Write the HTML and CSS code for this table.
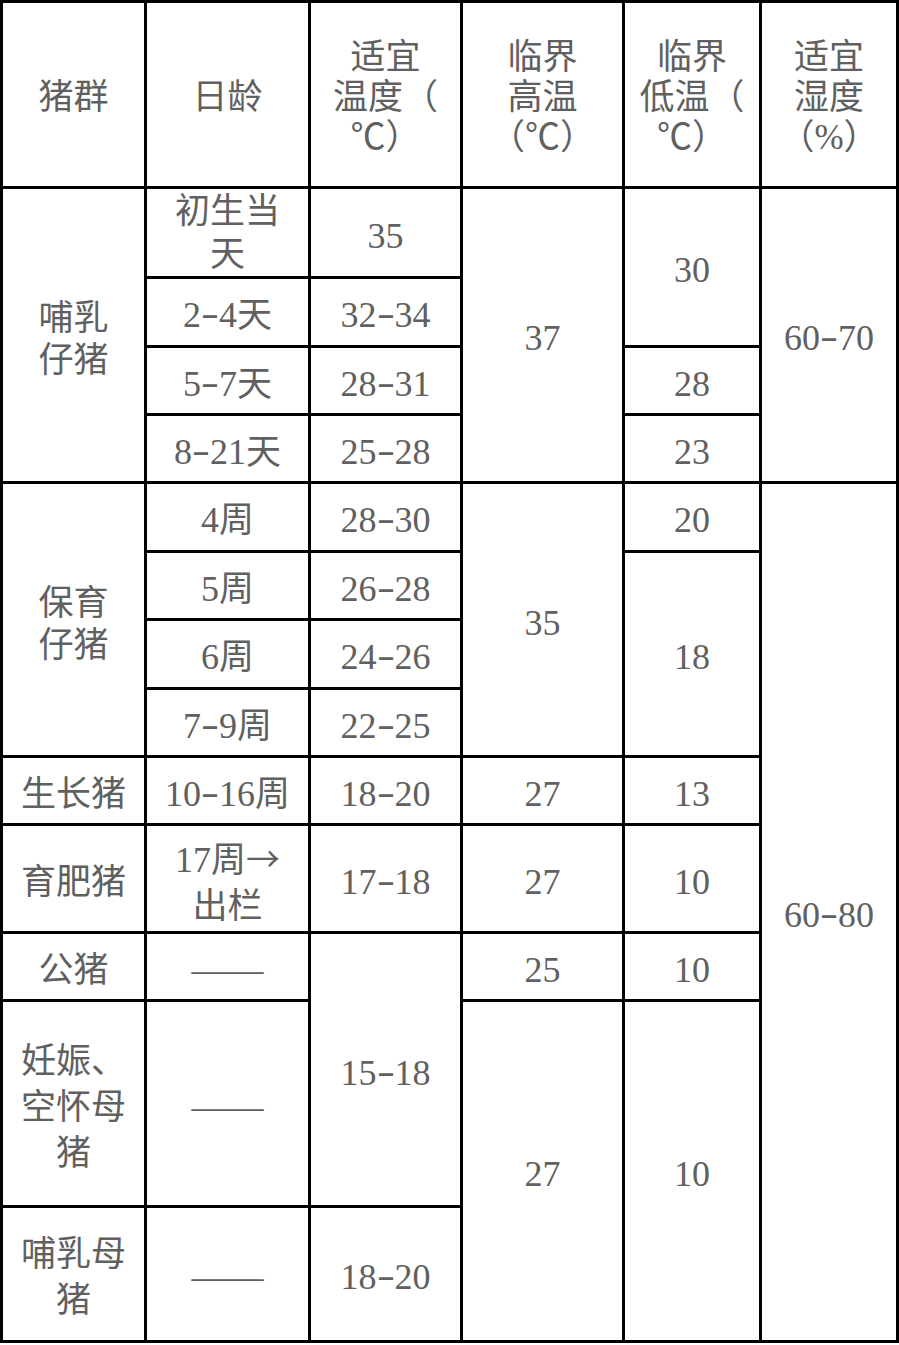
FILE: index.html
```html
<!DOCTYPE html>
<html lang="zh-CN">
<head>
<meta charset="utf-8">
<title>猪群适宜温湿度</title>
<link rel="stylesheet" href="styles.css">
</head>
<body>
<table class="grid">
  <colgroup>
    <col class="c1"><col class="c2"><col class="c3"><col class="c4"><col class="c5"><col class="c6">
  </colgroup>
  <tr class="rh">
    <td class="head">猪群</td>
    <td class="head">日龄</td>
    <td class="head">适宜<br>温度（<br>℃）</td>
    <td class="head">临界<br>高温<br>（℃）</td>
    <td class="head">临界<br>低温（<br>℃）</td>
    <td class="head">适宜<br>湿度<br>（%）</td>
  </tr>
  <tr class="r1">
    <td rowspan="4" class="tight">哺乳<br>仔猪</td>
    <td class="snug">初生当<br>天</td>
    <td><span class="n">35</span></td>
    <td rowspan="4"><span class="n">37</span></td>
    <td rowspan="2"><span class="n">30</span></td>
    <td rowspan="4"><span class="n">60<span class="dash">-</span>70</span></td>
  </tr>
  <tr class="r2">
    <td><span class="n">2<span class="dash">-</span>4</span>天</td>
    <td><span class="n">32<span class="dash">-</span>34</span></td>
  </tr>
  <tr class="r3">
    <td><span class="n">5<span class="dash">-</span>7</span>天</td>
    <td><span class="n">28<span class="dash">-</span>31</span></td>
    <td><span class="n">28</span></td>
  </tr>
  <tr class="r4">
    <td><span class="n">8<span class="dash">-</span>21</span>天</td>
    <td><span class="n">25<span class="dash">-</span>28</span></td>
    <td><span class="n">23</span></td>
  </tr>
  <tr class="r5">
    <td rowspan="4" class="tight">保育<br>仔猪</td>
    <td><span class="n">4</span>周</td>
    <td><span class="n">28<span class="dash">-</span>30</span></td>
    <td rowspan="4"><span class="n">35</span></td>
    <td><span class="n">20</span></td>
    <td rowspan="9"><span class="n">60<span class="dash">-</span>80</span></td>
  </tr>
  <tr class="r6">
    <td><span class="n">5</span>周</td>
    <td><span class="n">26<span class="dash">-</span>28</span></td>
    <td rowspan="3"><span class="n">18</span></td>
  </tr>
  <tr class="r7">
    <td><span class="n">6</span>周</td>
    <td><span class="n">24<span class="dash">-</span>26</span></td>
  </tr>
  <tr class="r8">
    <td><span class="n">7<span class="dash">-</span>9</span>周</td>
    <td><span class="n">22<span class="dash">-</span>25</span></td>
  </tr>
  <tr class="r9">
    <td>生长猪</td>
    <td><span class="n">10<span class="dash">-</span>16</span>周</td>
    <td><span class="n">18<span class="dash">-</span>20</span></td>
    <td><span class="n">27</span></td>
    <td><span class="n">13</span></td>
  </tr>
  <tr class="r10">
    <td>育肥猪</td>
    <td><span class="n">17</span>周<span class="arrow">→</span><br>出栏</td>
    <td><span class="n">17<span class="dash">-</span>18</span></td>
    <td><span class="n">27</span></td>
    <td><span class="n">10</span></td>
  </tr>
  <tr class="r11">
    <td>公猪</td>
    <td><span class="n">——</span></td>
    <td rowspan="2"><span class="n">15<span class="dash">-</span>18</span></td>
    <td><span class="n">25</span></td>
    <td><span class="n">10</span></td>
  </tr>
  <tr class="r12">
    <td>妊娠、<br>空怀母<br>猪</td>
    <td><span class="n">——</span></td>
    <td rowspan="2"><span class="n">27</span></td>
    <td rowspan="2"><span class="n">10</span></td>
  </tr>
  <tr class="r13">
    <td>哺乳母<br>猪</td>
    <td><span class="n">——</span></td>
    <td><span class="n">18<span class="dash">-</span>20</span></td>
  </tr>
</table>
</body>
</html>
```

FILE: styles.css
```css
html, body {
  margin: 0;
  padding: 0;
  background: #ffffff;
}

.grid {
  border-collapse: collapse;
  table-layout: fixed;
  width: 898px;
  font-family: "Liberation Serif", "Noto Sans CJK SC", serif;
  font-size: 35px;
  font-weight: 400;
  color: #606060;
}

.c1 { width: 144px; }
.c2 { width: 164px; }
.c3 { width: 152px; }
.c4 { width: 162px; }
.c5 { width: 137px; }
.c6 { width: 137px; }

.grid td {
  border: 3px solid #000000;
  padding: 8px 0 0 0;
  text-align: center;
  vertical-align: middle;
  line-height: 46px;
  white-space: nowrap;
}

.grid td.head {
  line-height: 40px;
  padding-top: 6px;
}

.grid td.tight {
  line-height: 42px;
  padding-top: 10px;
}

.grid td.snug {
  line-height: 43px;
  padding-top: 1px;
}

.n {
  font-family: "Liberation Serif", serif;
  font-size: 36px;
  line-height: 1;
}

.dash {
  display: inline-block;
  margin: 0 3px;
  transform: translateY(-2px) scaleX(1.5);
}

.arrow {
  font-family: "Noto Sans CJK SC", sans-serif;
  font-size: 34px;
}

.rh  { height: 186px; }
.r1  { height: 90px; }
.r2  { height: 69px; }
.r3  { height: 68px; }
.r4  { height: 68px; }
.r5  { height: 69px; }
.r6  { height: 68px; }
.r7  { height: 69px; }
.r8  { height: 68px; }
.r9  { height: 68px; }
.r10 { height: 108px; }
.r11 { height: 68px; }
.r12 { height: 206px; }
.r13 { height: 135px; }
```
